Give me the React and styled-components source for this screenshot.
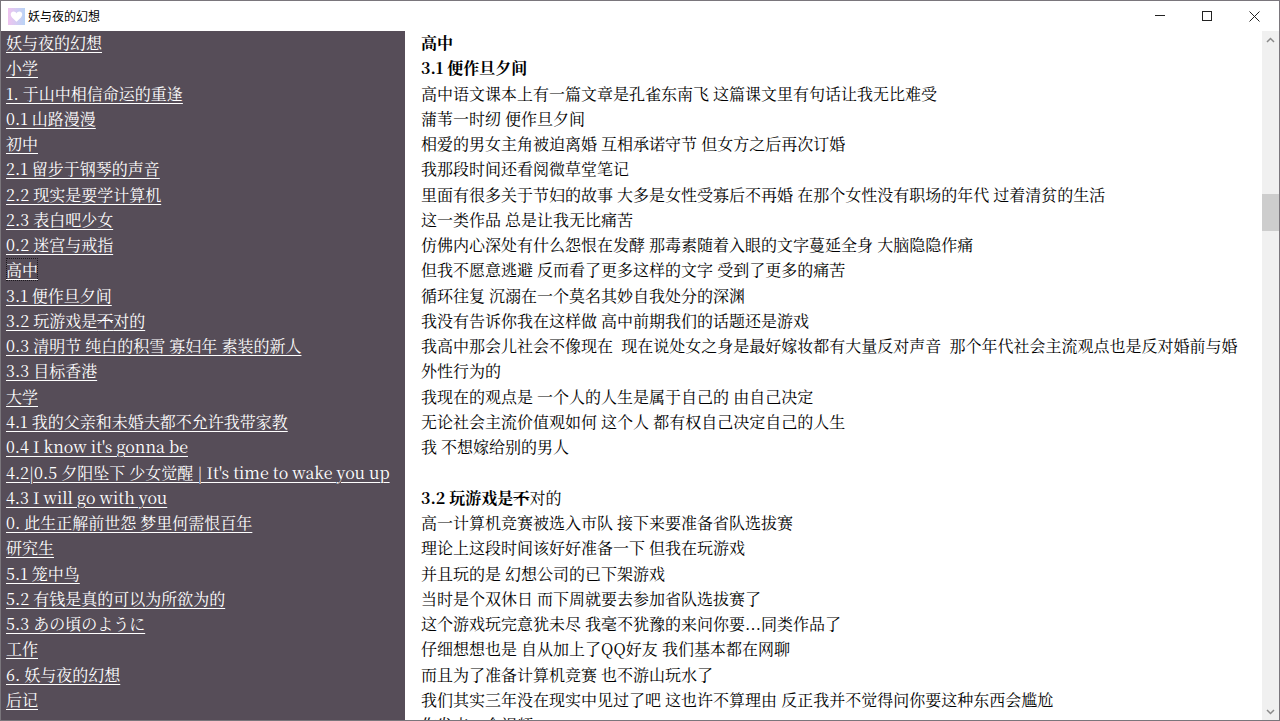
import React, { useState } from "react";
import styled, { createGlobalStyle, css } from "styled-components";

const GlobalStyle = createGlobalStyle`
  * {
    box-sizing: border-box;
  }

  body {
    margin: 0;
    background-color: #ffffff;
    color: #000000;
    font-family: "Noto Serif CJK SC", "Liberation Serif", "Noto Sans CJK SC", serif;
    font-size: 16px;
    line-height: 1.58;
  }
`;

const Window = styled.div`
  display: flex;
  flex-direction: column;
  height: 100vh;
  border: 1px solid #7a767c;
  overflow: hidden;
`;

const TitleBar = styled.header`
  display: flex;
  flex: none;
  align-items: center;
  height: 30px;
  padding: 0 1px 0 7px;
  background-color: #ffffff;
`;

const Title = styled.h1`
  flex: 1;
  margin: 0 0 0 3px;
  font-family: "Noto Sans CJK SC", sans-serif;
  font-size: 12px;
  font-weight: 400;
  line-height: 16px;
`;

const WindowButton = styled.button`
  display: flex;
  align-items: center;
  justify-content: center;
  width: 47px;
  height: 30px;
  padding: 0;
  border: none;
  background: none;
  color: #222222;

  &:hover {
    background-color: #e5e5e5;
  }
`;

const Body = styled.div`
  display: flex;
  flex: 1;
  min-height: 0;
`;

const Sidebar = styled.nav`
  flex: none;
  width: 404px;
  padding: 0 5px;
  background-color: #564d58;
  overflow: hidden;
`;

const ChapterList = styled.ul`
  margin: -1px 0 0;
  padding: 0;
  list-style: none;
  white-space: nowrap;
`;

const ChapterLink = styled.a`
  color: #ffffff;
  text-decoration: underline;
  text-underline-offset: 3px;
  text-decoration-thickness: 1px;

  ${(props) =>
    props.$current &&
    css`
      outline: 1px dotted #1c181d;
      outline-offset: -1px;
    `}
`;

const Ellipsis = styled.span`
  font-family: "Liberation Serif", serif;
  line-height: 1;
`;

const Article = styled.main`
  flex: 1;
  min-width: 0;
  margin-top: -1px;
  padding: 0 16px;
  overflow: hidden;
`;

const Heading = styled.h2`
  margin: 0;
  font-size: 16px;
  font-weight: 700;
`;

const Line = styled.p`
  margin: 0;
  white-space: pre-wrap;
`;

const Plain = styled.span`
  font-weight: 400;
`;

const ScrollBar = styled.div`
  display: flex;
  flex: none;
  flex-direction: column;
  width: 17px;
  background-color: #f0f0f0;
`;

const ScrollButton = styled.button`
  display: flex;
  align-items: center;
  justify-content: center;
  height: 17px;
  padding: 0;
  border: none;
  background: none;
  color: #8a8a8a;
`;

const Track = styled.div`
  display: flex;
  flex: 1;
  flex-direction: column;
`;

const Above = styled.div`
  flex: 146;
`;

const Thumb = styled.div`
  flex: 37;
  background-color: #cdcdcd;
`;

const Below = styled.div`
  flex: 473;
`;

const chapters = [
  "妖与夜的幻想",
  "小学",
  "1. 于山中相信命运的重逢",
  "0.1 山路漫漫",
  "初中",
  "2.1 留步于钢琴的声音",
  "2.2 现实是要学计算机",
  "2.3 表白吧少女",
  "0.2 迷宫与戒指",
  "高中",
  "3.1 便作旦夕间",
  "3.2 玩游戏是~不~对的",
  "0.3 清明节 纯白的积雪 寡妇年 素装的新人",
  "3.3 目标香港",
  "大学",
  "4.1 我的父亲和未婚夫都不允许我带家教",
  "0.4 I know it's gonna be",
  "4.2|0.5 夕阳坠下 少女觉醒 | It's time to wake you up",
  "4.3 I will go with you",
  "0. 此生正解前世怨 梦里何需恨百年",
  "研究生",
  "5.1 笼中鸟",
  "5.2 有钱是真的可以为所欲为的",
  "5.3 あの頃のように",
  "工作",
  "6. 妖与夜的幻想",
  "后记",
];

const firstPart = [
  "高中语文课本上有一篇文章是孔雀东南飞 这篇课文里有句话让我无比难受",
  "蒲苇一时纫 便作旦夕间",
  "相爱的男女主角被迫离婚 互相承诺守节 但女方之后再次订婚",
  "我那段时间还看阅微草堂笔记",
  "里面有很多关于节妇的故事 大多是女性受寡后不再婚 在那个女性没有职场的年代 过着清贫的生活",
  "这一类作品 总是让我无比痛苦",
  "仿佛内心深处有什么怨恨在发酵 那毒素随着入眼的文字蔓延全身 大脑隐隐作痛",
  "但我不愿意逃避 反而看了更多这样的文字 受到了更多的痛苦",
  "循环往复 沉溺在一个莫名其妙自我处分的深渊",
  "我没有告诉你我在这样做 高中前期我们的话题还是游戏",
  "我高中那会儿社会不像现在  现在说处女之身是最好嫁妆都有大量反对声音  那个年代社会主流观点也是反对婚前与婚外性行为的",
  "我现在的观点是 一个人的人生是属于自己的 由自己决定",
  "无论社会主流价值观如何 这个人 都有权自己决定自己的人生",
  "我 不想嫁给别的男人",
  " ",
];

const secondPart = [
  "高一计算机竞赛被选入市队 接下来要准备省队选拔赛",
  "理论上这段时间该好好准备一下 但我在玩游戏",
  "并且玩的是 幻想公司的已下架游戏",
  "当时是个双休日 而下周就要去参加省队选拔赛了",
  "这个游戏玩完意犹未尽 我毫不犹豫的来问你要…同类作品了",
  "仔细想想也是 自从加上了QQ好友 我们基本都在网聊",
  "而且为了准备计算机竞赛 也不游山玩水了",
  "我们其实三年没在现实中见过了吧 这也许不算理由 反正我并不觉得问你要这种东西会尴尬",
  "你发来一个视频",
];

// text between tildes is struck through, ellipsis dots sit on the baseline
const RichText = ({ text }) =>
  text.split(/(~[^~]+~|…)/).map((part, i) => {
    if (part.startsWith("~")) {
      return <s key={i}>{part.slice(1, -1)}</s>;
    }
    return part === "…" ? <Ellipsis key={i}>{part}</Ellipsis> : part;
  });

const Logo = () => (
  <svg width="17" height="17" viewBox="0 0 17 17" aria-hidden="true">
    <defs>
      <linearGradient id="logo" x1="0" y1="0" x2="1" y2="0">
        <stop offset="0" stopColor="#efc4ef" />
        <stop offset="1" stopColor="#b9d4f6" />
      </linearGradient>
    </defs>
    <rect width="17" height="17" fill="url(#logo)" />
    <path
      d="M8.5 13.8 4 9.4C1.6 6.8 3 3.6 5.5 3.6c1.4 0 2.4.8 3 1.8.6-1 1.6-1.8 3-1.8 2.5 0 3.9 3.2 1.5 5.8Z"
      fill="#ffffff"
    />
  </svg>
);

const App = () => {
  const [current, setCurrent] = useState(9);

  return (
    <>
      <GlobalStyle />
      <Window>
        <TitleBar>
          <Logo />
          <Title>妖与夜的幻想</Title>
          <WindowButton aria-label="最小化">
            <svg width="11" height="11" viewBox="0 0 11 11">
              <path d="M0 4.5h10" stroke="currentColor" />
            </svg>
          </WindowButton>
          <WindowButton aria-label="最大化">
            <svg width="11" height="11" viewBox="0 0 11 11">
              <rect x=".5" y=".5" width="9" height="9" fill="none" stroke="currentColor" />
            </svg>
          </WindowButton>
          <WindowButton aria-label="关闭">
            <svg width="11" height="11" viewBox="0 0 11 11">
              <path d="m.5.5 10 10m0-10-10 10" stroke="currentColor" />
            </svg>
          </WindowButton>
        </TitleBar>
        <Body>
          <Sidebar>
            <ChapterList>
              {chapters.map((chapter, i) => (
                <li key={i}>
                  <ChapterLink
                    href={`#chapter-${i}`}
                    $current={i === current}
                    onClick={() => setCurrent(i)}
                  >
                    <RichText text={chapter} />
                  </ChapterLink>
                </li>
              ))}
            </ChapterList>
          </Sidebar>
          <Article>
            <Heading id="chapter-9">高中</Heading>
            <Heading id="chapter-10">3.1 便作旦夕间</Heading>
            {firstPart.map((line, i) => (
              <Line key={i}>
                <RichText text={line} />
              </Line>
            ))}
            <Heading id="chapter-11">
              <RichText text="3.2 玩游戏是~不~" />
              <Plain>对的</Plain>
            </Heading>
            {secondPart.map((line, i) => (
              <Line key={i}>
                <RichText text={line} />
              </Line>
            ))}
          </Article>
          <ScrollBar>
            <ScrollButton aria-label="向上滚动">
              <svg width="9" height="6" viewBox="0 0 9 6">
                <path d="m1 5 3.5-3.5L8 5" fill="none" stroke="currentColor" strokeWidth="1.5" />
              </svg>
            </ScrollButton>
            <Track>
              <Above />
              <Thumb />
              <Below />
            </Track>
            <ScrollButton aria-label="向下滚动">
              <svg width="9" height="6" viewBox="0 0 9 6">
                <path d="m1 1 3.5 3.5L8 1" fill="none" stroke="currentColor" strokeWidth="1.5" />
              </svg>
            </ScrollButton>
          </ScrollBar>
        </Body>
      </Window>
    </>
  );
};

export default App;
